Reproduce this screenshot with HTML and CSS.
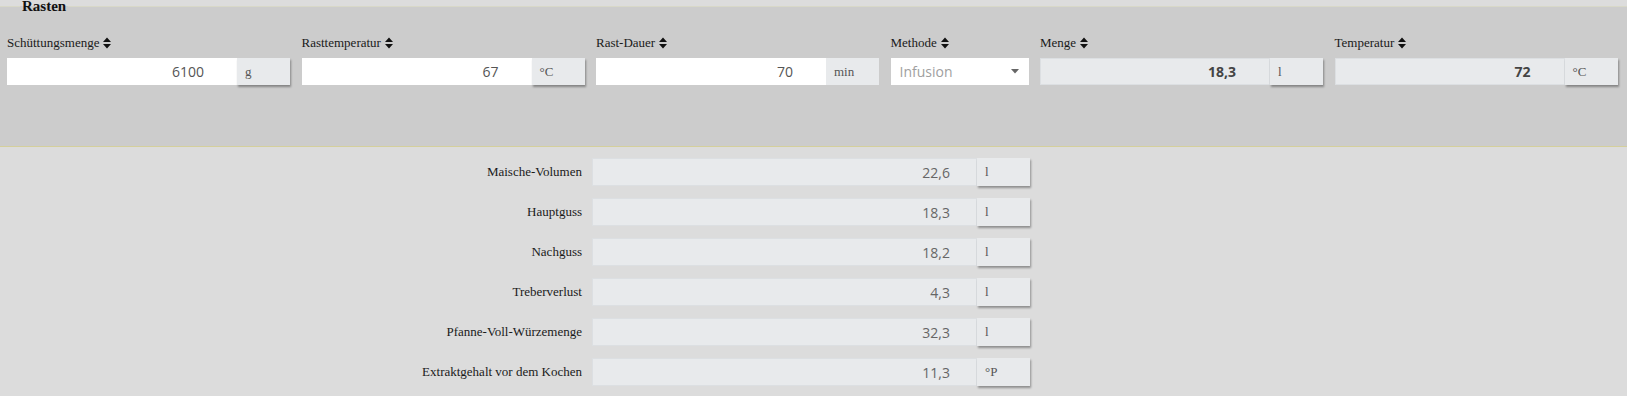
FILE: index.html
```html
<!DOCTYPE html>
<html lang="de">
<head>
<meta charset="utf-8">
<title>Rasten</title>
<link rel="stylesheet" href="styles.css">
</head>
<body>
<fieldset class="rasten">
  <legend class="rasten-legend">Rasten</legend>
  <div class="rast-grid">
    <div class="fg">
      <div class="lbl">Schüttungsmenge <svg class="sort" viewBox="0 0 8 12"><path d="M4 0.5 L8 5 L0 5 Z M0 7 L8 7 L4 11.5 Z"/></svg></div>
      <div class="ig"><span class="field edit">6100</span><span class="addon">g</span></div>
    </div>
    <div class="fg">
      <div class="lbl">Rasttemperatur <svg class="sort" viewBox="0 0 8 12"><path d="M4 0.5 L8 5 L0 5 Z M0 7 L8 7 L4 11.5 Z"/></svg></div>
      <div class="ig"><span class="field edit">67</span><span class="addon">°C</span></div>
    </div>
    <div class="fg">
      <div class="lbl">Rast-Dauer <svg class="sort" viewBox="0 0 8 12"><path d="M4 0.5 L8 5 L0 5 Z M0 7 L8 7 L4 11.5 Z"/></svg></div>
      <div class="ig"><span class="field edit">70</span><span class="addon flat">min</span></div>
    </div>
    <div class="fg">
      <div class="lbl">Methode <svg class="sort" viewBox="0 0 8 12"><path d="M4 0.5 L8 5 L0 5 Z M0 7 L8 7 L4 11.5 Z"/></svg></div>
      <div class="select"><span>Infusion</span><svg class="caret" viewBox="0 0 8 5"><path d="M0 0 L8 0 L4 4.5 Z"/></svg></div>
    </div>
    <div class="fg">
      <div class="lbl">Menge <svg class="sort" viewBox="0 0 8 12"><path d="M4 0.5 L8 5 L0 5 Z M0 7 L8 7 L4 11.5 Z"/></svg></div>
      <div class="ig"><span class="field ro bold">18,3</span><span class="addon">l</span></div>
    </div>
    <div class="fg">
      <div class="lbl">Temperatur <svg class="sort" viewBox="0 0 8 12"><path d="M4 0.5 L8 5 L0 5 Z M0 7 L8 7 L4 11.5 Z"/></svg></div>
      <div class="ig"><span class="field ro bold">72</span><span class="addon">°C</span></div>
    </div>
  </div>
</fieldset>

<div class="calc">
  <div class="calc-row">
    <div class="calc-lbl">Maische-Volumen</div>
    <div class="ig"><span class="field ro">22,6</span><span class="addon">l</span></div>
  </div>
  <div class="calc-row">
    <div class="calc-lbl">Hauptguss</div>
    <div class="ig"><span class="field ro">18,3</span><span class="addon">l</span></div>
  </div>
  <div class="calc-row">
    <div class="calc-lbl">Nachguss</div>
    <div class="ig"><span class="field ro">18,2</span><span class="addon">l</span></div>
  </div>
  <div class="calc-row">
    <div class="calc-lbl">Treberverlust</div>
    <div class="ig"><span class="field ro">4,3</span><span class="addon">l</span></div>
  </div>
  <div class="calc-row">
    <div class="calc-lbl">Pfanne-Voll-Würzemenge</div>
    <div class="ig"><span class="field ro">32,3</span><span class="addon">l</span></div>
  </div>
  <div class="calc-row">
    <div class="calc-lbl">Extraktgehalt vor dem Kochen</div>
    <div class="ig"><span class="field ro">11,3</span><span class="addon">°P</span></div>
  </div>
</div>
</body>
</html>
```
FILE: styles.css
```css
html, body {
  margin: 0;
  padding: 0;
}
body {
  background: #dcdcdc;
  font-family: "Liberation Serif", "Times New Roman", serif;
  color: #222;
  width: 1627px;
  height: 396px;
  overflow: hidden;
}

.rasten {
  margin: 0;
  padding: 22px 0 61px 7px;
  border: none;
  border-top: 1px solid #d8d8c8;
  border-bottom: 1px solid #d4cf9c;
  background: #cccccc;
  min-width: 0;
}
.rasten-legend {
  margin-left: 13px;
  padding: 0 2px;
  font-size: 15px;
  font-weight: bold;
  line-height: 12px;
  color: #111;
}

.rast-grid {
  display: grid;
  grid-template-columns: 283px 283px 283px 138px 283px 283px;
  column-gap: 11.5px;
}
.fg {
  display: flex;
  flex-direction: column;
  gap: 6px;
}
.lbl {
  font-size: 13px;
  line-height: 18px;
  color: #1a1a1a;
  display: flex;
  align-items: center;
  gap: 4px;
  white-space: nowrap;
}
.sort {
  width: 8px;
  height: 12px;
  fill: #111;
}

.ig {
  display: flex;
  height: 27px;
}
.field {
  flex: 1;
  display: flex;
  align-items: center;
  justify-content: flex-end;
  padding-right: 33px;
  font-family: "Open Sans", "Liberation Sans", sans-serif;
  font-size: 14px;
  color: #555;
  box-sizing: border-box;
}
.field.edit {
  background: #ffffff;
}
.field.ro {
  background: #e8eaec;
  border: 1px solid #dcdfe2;
}
.field.bold {
  font-weight: bold;
  color: #444;
}
.addon {
  width: 53px;
  flex: none;
  display: flex;
  align-items: center;
  padding-left: 8px;
  box-sizing: border-box;
  background: #e8eaec;
  font-size: 13px;
  color: #555;
  box-shadow: 1px 2px 2px rgba(0, 0, 0, 0.35);
}
.addon.flat {
  box-shadow: none;
}

.select {
  height: 27px;
  background: #ffffff;
  display: flex;
  align-items: center;
  justify-content: space-between;
  padding: 0 10px 0 9px;
  font-family: "Open Sans", "Liberation Sans", sans-serif;
  font-size: 14px;
  color: #a0a0a0;
}
.caret {
  width: 8px;
  height: 5px;
  fill: #666;
}

.calc {
  padding-top: 11px;
  display: flex;
  flex-direction: column;
  gap: 12px;
}
.calc-row {
  display: grid;
  grid-template-columns: 582px 438px;
  column-gap: 10px;
  align-items: center;
}
.calc-lbl {
  text-align: right;
  font-size: 13px;
  color: #1a1a1a;
}
.calc .ig {
  height: 28px;
}
.calc .field {
  padding-right: 26px;
  color: #666;
}
```
